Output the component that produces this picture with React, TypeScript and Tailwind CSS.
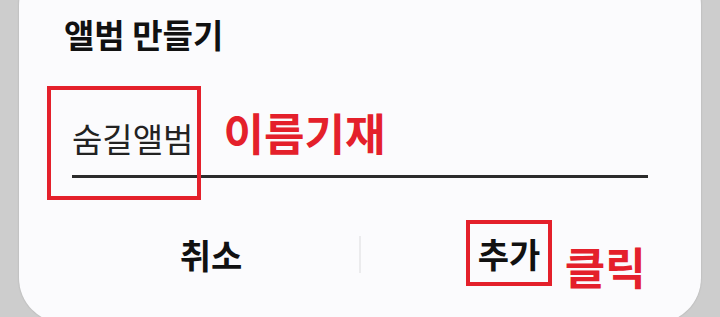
import React from "react";

const font = { fontFamily: '"Noto Sans CJK KR", "Noto Sans", sans-serif' };

export default function App() {
  return (
    <div
      className="w-[720px] h-[317px] overflow-hidden bg-[#cdcdcd] px-[19px]"
      style={font}
    >
      <div className="-mt-[40px] h-[363px] rounded-[45px] bg-[#fbfbfd] pt-[58px] shadow-[0_0_2px_rgba(0,0,0,0.18)] flex flex-col">
        {/* title */}
        <h2 className="pl-[45px] text-[33px] leading-none font-bold text-[#111]">
          앨범 만들기
        </h2>

        {/* name input */}
        <div className="relative mx-[53px] mt-[71px]">
          <div className="flex items-start">
            <span className="text-[33px] leading-none text-[#222]">숨길앨범</span>
            <span className="ml-[30px] -mt-[12px] text-[44px] leading-none font-bold text-[#e4202b]">
              이름기재
            </span>
          </div>
          <div className="mt-[20px] h-[3px] bg-[#2b2b2b]" />
          <div className="absolute -left-[25px] -top-[36px] w-[154px] h-[114px] border-[4px] border-[#e4202b]" />
        </div>

        {/* buttons */}
        <div className="mt-[58px] flex items-center px-[44px]">
          <div className="flex-1 flex justify-center">
            <button className="text-[34px] leading-none font-bold text-[#111]">취소</button>
          </div>
          <div className="w-[2px] h-[37px] bg-[#ebebed]" />
          <div className="flex-1 flex justify-center">
            <div className="relative">
              <button className="text-[34px] leading-none font-bold text-[#111]">추가</button>
              <div className="absolute -left-[12px] -top-[17px] w-[86px] h-[66px] border-[4px] border-[#e4202b]" />
              <span className="absolute left-[87px] top-[7px] whitespace-nowrap text-[44px] leading-none font-bold text-[#e4202b]">
                클릭
              </span>
            </div>
          </div>
        </div>
      </div>
    </div>
  );
}
